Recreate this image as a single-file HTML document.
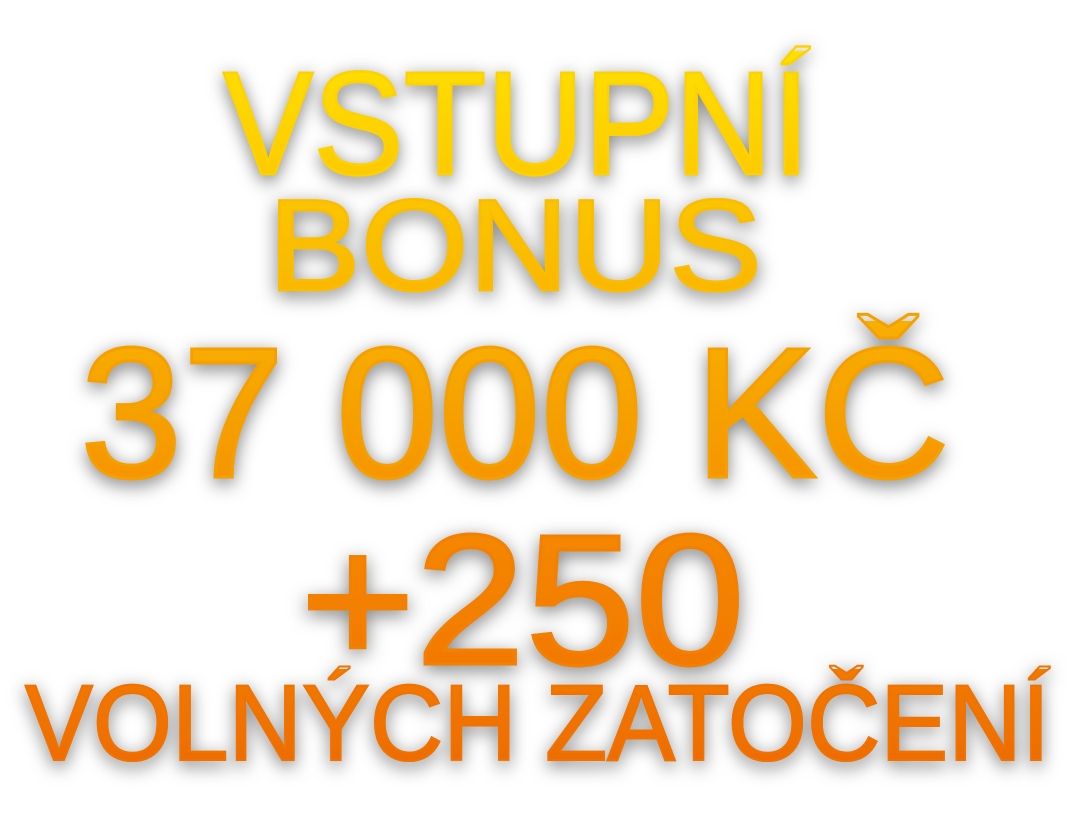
<!DOCTYPE html>
<html><head><meta charset="utf-8"><style>
html,body{margin:0;padding:0;background:#fff;width:1080px;height:834px;overflow:hidden}
.l{position:absolute;white-space:nowrap;font-family:"Liberation Sans",Arial,sans-serif;line-height:1;transform-origin:0 0;
 -webkit-background-clip:text;background-clip:text;color:transparent;
 filter:drop-shadow(0 5px 9px rgba(0,0,0,.5));}
</style></head><body>
<div class="l" data-x="223" data-w="587" style="top:51px;font-size:147px;-webkit-text-stroke:2.5px #fdd200;background-image:linear-gradient(#ffe000,#fcc600)">VSTUPNÍ</div>
<div class="l" data-x="268" data-w="494" style="top:180px;font-size:130px;-webkit-text-stroke:2.5px #fabd00;background-image:linear-gradient(#fcc800,#f9b400)">BONUS</div>
<div class="l" data-x="80" data-w="870" style="top:321px;font-size:186px;-webkit-text-stroke:3px #f6a000;background-image:linear-gradient(#f8b000,#f59000)">37 000 KČ</div>
<div class="l" data-x="300" data-w="445" style="top:508px;font-size:186px;-webkit-text-stroke:3px #f38000;background-image:linear-gradient(#f58a00,#f27600)">+250</div>
<div class="l" data-x="25" data-w="1025" style="top:669px;font-size:108px;-webkit-text-stroke:2px #f07200;background-image:linear-gradient(#f27a00,#ee6a00)">VOLNÝCH ZATOČENÍ</div>
<script>
document.querySelectorAll('.l').forEach(function(e){
 var w=e.getBoundingClientRect().width, t=+e.dataset.w;
 e.style.left=e.dataset.x+'px';
 e.style.transform='scaleX('+(t/w)+')';
});
</script>
</body></html>
